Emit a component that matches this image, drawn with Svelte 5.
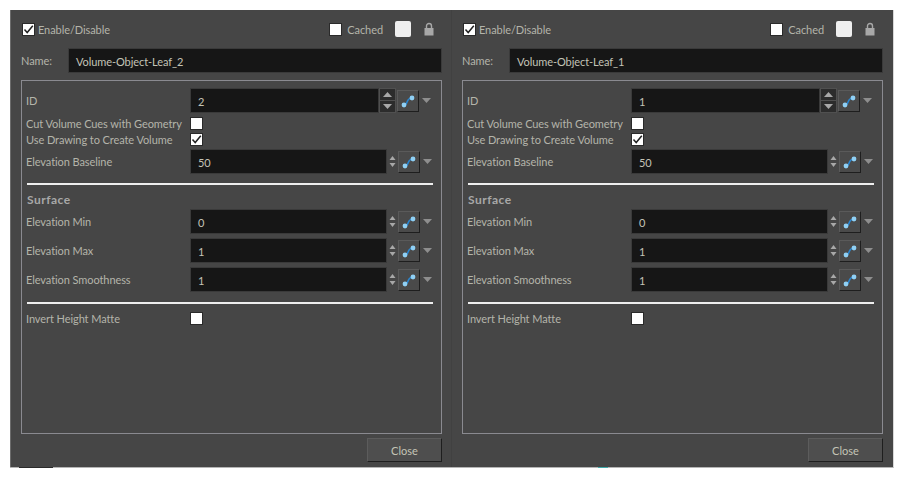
<script lang="ts">
  const panels = [
    { name: 'Volume-Object-Leaf_2', id: '2' },
    { name: 'Volume-Object-Leaf_1', id: '1' }
  ];
</script>

{#snippet check(on = false)}
  <span class="check">
    {#if on}
      <svg width="11" height="11" viewBox="0 0 11 11"><path d="M1.5 5.5 L4.2 8.5 L9.8 1.8" fill="none" stroke="#222" stroke-width="1.5" /></svg>
    {/if}
  </span>
{/snippet}

{#snippet curve()}
  <div class="extras">
    <button class="curve" aria-label="Function">
      <svg width="20" height="20" viewBox="0 0 20 20">
        <path d="M6 14 C10.5 14 7.5 7 14 7" fill="none" stroke="#2a86d0" stroke-width="1.6" />
        <circle cx="6" cy="14" r="2.4" fill="#8fd0f5" />
        <circle cx="14" cy="7" r="2.4" fill="#8fd0f5" />
      </svg>
    </button>
    <svg class="caret" width="9" height="5" viewBox="0 0 9 5"><path d="M0 0 H9 L4.5 5 Z" fill="#8e8e8e" /></svg>
  </div>
{/snippet}

{#snippet field(label, value)}
  <div class="row">
    <span class="label">{label}</span>
    <div class="value">
      <div class="input num">{value}</div>
      <div class="mini">
        <svg width="7" height="13" viewBox="0 0 7 13"><path d="M3.5 1 L6.5 5 H0.5 Z M3.5 12 L6.5 8 H0.5 Z" fill="#a8a8a8" /></svg>
      </div>
      {@render curve()}
    </div>
  </div>
{/snippet}

<div class="window">
  {#each panels as p}
    <section class="panel">
      <header class="top">
        <label class="enable">{@render check(true)} Enable/Disable</label>
        <div class="top-right">
          <label class="cached">{@render check()} Cached</label>
          <span class="swatch"></span>
          <svg class="lock" width="10" height="14" viewBox="0 0 10 14">
            <path d="M2.5 6 V4 a2.5 2.5 0 0 1 5 0 V6" fill="none" stroke="#a8a8a8" stroke-width="1.4" />
            <rect x="0.5" y="6" width="9" height="7.5" fill="#a8a8a8" />
          </svg>
        </div>
      </header>

      <div class="name-row">
        <span class="label">Name:</span>
        <div class="input name">{p.name}</div>
      </div>

      <div class="group">
        <div class="row id-row">
          <span class="label">ID</span>
          <div class="value">
            <div class="input id">{p.id}</div>
            <div class="spin">
              <span><svg width="9" height="5" viewBox="0 0 9 5"><path d="M4.5 0 L9 5 H0 Z" fill="#a8a8a8" /></svg></span>
              <span><svg width="9" height="5" viewBox="0 0 9 5"><path d="M0 0 H9 L4.5 5 Z" fill="#a8a8a8" /></svg></span>
            </div>
            {@render curve()}
          </div>
        </div>
        <div class="row small first">
          <span class="label">Cut Volume Cues with Geometry</span>
          {@render check()}
        </div>
        <div class="row small last">
          <span class="label">Use Drawing to Create Volume</span>
          {@render check(true)}
        </div>
        {@render field('Elevation Baseline', '50')}

        <hr />
        <h3>Surface</h3>

        <div class="stack">
          {@render field('Elevation Min', '0')}
          {@render field('Elevation Max', '1')}
          {@render field('Elevation Smoothness', '1')}
        </div>

        <hr class="second" />

        <div class="row small invert">
          <span class="label">Invert Height Matte</span>
          {@render check()}
        </div>
      </div>

      <footer class="bottom">
        <button class="close">Close</button>
      </footer>
    </section>
  {/each}
  <span class="edge dark"></span>
  <span class="edge teal"></span>
</div>

<style>
  :global(body) {
    margin: 0;
    background: #fff;
  }

  .window {
    position: relative;
    display: flex;
    width: 883px;
    height: 457px;
    margin: 10px 0 0 10px;
    background: #464646;
    border-bottom: 1px solid #b5b5b5;
    border-right: 1px solid #d8d8d8;
    box-shadow: inset 1px 0 0 #6c6c6c;
    font: 11px "Lato", "Noto Sans", sans-serif;
    letter-spacing: -0.08px;
    color: #b4b4aa;
  }

  .edge {
    position: absolute;
    bottom: -1px;
    height: 1px;
  }

  .dark {
    left: 9px;
    width: 34px;
    background: #2a2a2a;
  }

  .teal {
    left: 588px;
    width: 10px;
    background: #3fa8a8;
  }

  .panel {
    width: 441px;
    box-sizing: border-box;
    padding: 0 0 0 11px;
    display: flex;
    flex-direction: column;
  }

  .panel + .panel {
    width: 442px;
    padding-left: 10px;
    border-left: 1px solid #414141;
  }

  .top {
    height: 38px;
    display: flex;
    align-items: center;
    justify-content: space-between;
    padding: 0 3px 0 1px;
    box-sizing: border-box;
    width: 421px;
  }

  .enable,
  .cached {
    display: flex;
    align-items: center;
    gap: 3px;
  }

  .cached {
    gap: 5px;
  }

  .top-right {
    display: flex;
    align-items: center;
    padding-right: 5px;
  }

  .swatch {
    width: 16px;
    height: 16px;
    margin: 0 13px 0 12px;
    background: #efefef;
    border-radius: 2px;
  }

  .check {
    width: 11px;
    height: 11px;
    flex: none;
    background: #fff;
    border: 1px solid #2a2a2a;
    display: inline-flex;
  }

  .name-row {
    display: flex;
    align-items: center;
    height: 25px;
    width: 421px;
  }

  .name-row .label {
    width: 47px;
    flex: none;
    white-space: nowrap;
  }

  .input {
    box-sizing: border-box;
    height: 25px;
    background: #161616;
    border: 1px solid #3a3a3a;
    color: #c4c4b6;
    display: flex;
    align-items: center;
    padding: 2px 0 0 7px;
  }

  .name {
    width: 374px;
    flex: none;
  }

  .group {
    box-sizing: border-box;
    width: 421px;
    height: 354px;
    margin-top: 7px;
    padding: 7px 8px 0 4px;
    border: 1px solid #8a8a90;
  }

  .row {
    display: flex;
    align-items: center;
    min-height: 25px;
  }

  .row.small {
    min-height: 16px;
  }

  .row.first {
    margin-top: 2px;
  }

  .row.last {
    margin-bottom: 2px;
  }

  .row .label {
    width: 164px;
    flex: none;
    white-space: nowrap;
  }

  .value {
    display: flex;
    align-items: center;
    flex: 1;
  }

  .num {
    width: 197px;
  }

  .id {
    width: 189px;
  }

  .mini {
    width: 10px;
    display: flex;
    justify-content: center;
  }

  .spin {
    display: flex;
    flex-direction: column;
    gap: 1px;
    background: #505050;
    width: 17px;
    padding: 1px;
    box-sizing: border-box;
  }

  .spin span {
    height: 11px;
    display: flex;
    align-items: center;
    justify-content: center;
    background: #2c2c2c;
  }

  .extras {
    display: flex;
    align-items: center;
    margin-left: 1px;
    gap: 3px;
  }

  .curve {
    width: 22px;
    height: 22px;
    padding: 0;
    display: flex;
    align-items: center;
    justify-content: center;
    background: #4a4a4a;
    border: 1px solid;
    border-color: #5a5a5a #1e1e1e #1e1e1e #5a5a5a;
  }

  .caret {
    flex: none;
  }

  hr {
    border: 0;
    height: 2px;
    background: #eeeeee;
    margin: 9px 0 0 1px;
  }

  hr.second {
    margin-top: 10px;
  }

  h3 {
    margin: 7px 0 2px 1px;
    font-size: 12px;
    font-weight: 700;
    letter-spacing: 0.5px;
    line-height: 15px;
    color: #a8a8a8;
  }

  .stack {
    display: flex;
    flex-direction: column;
    gap: 4px;
  }

  .invert {
    margin-top: 6px;
  }

  .bottom {
    display: flex;
    justify-content: flex-end;
    width: 421px;
    margin-top: 4px;
  }

  .close {
    width: 75px;
    height: 24px;
    padding: 0;
    background: #4e4e4e;
    border: 1px solid;
    border-color: #5c5c5c #1e1e1e #1e1e1e #5c5c5c;
    color: #c4c4b6;
    font: inherit;
  }
</style>
